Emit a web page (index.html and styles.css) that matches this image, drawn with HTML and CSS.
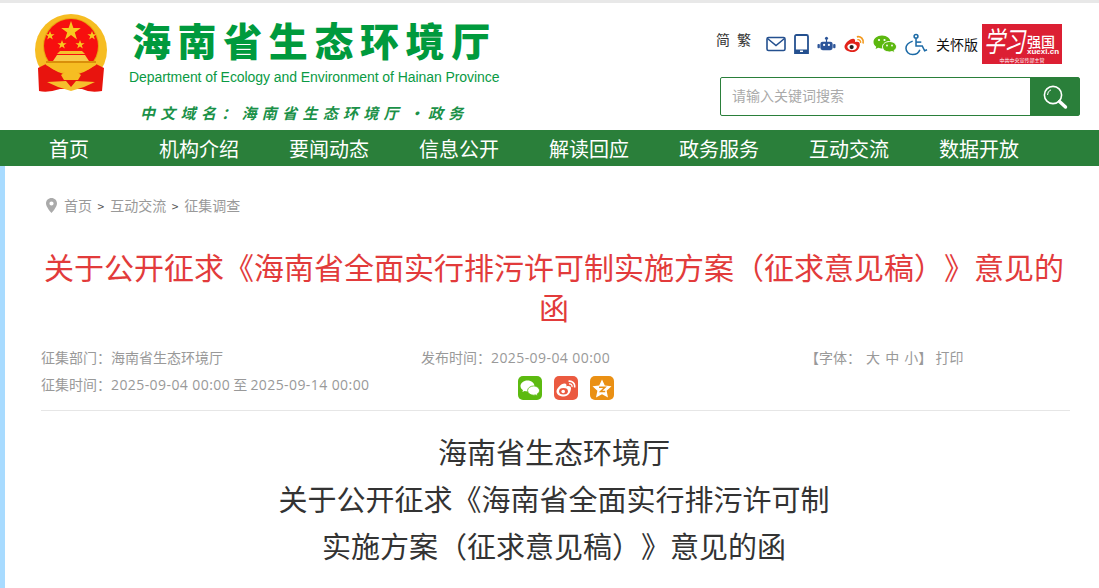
FILE: index.html
```html
<!DOCTYPE html>
<html lang="zh-CN">
<head>
    <meta charset="UTF-8">
    <title>关于公开征求《海南省全面实行排污许可制实施方案（征求意见稿）》意见的函</title>
    <link rel="stylesheet" href="styles.css">
</head>
<body>

<div class="header">
    <svg class="emblem" width="74" height="80" viewBox="0 0 74 80">
        <circle cx="37" cy="36" r="36" fill="#f6bd22"/>
        <circle cx="37" cy="32" r="28" fill="#e9a30f"/>
        <circle cx="37" cy="32" r="27" fill="#f70f0f"/>
        <path d="M4 54 L12 50 Q37 72 62 50 L70 54 L68 77 Q56 79 48 75 L26 75 Q14 79 5 77 Z" fill="#e8140e"/>
        <path d="M10 47 L64 47 L62 51 Q37 68 12 51 Z" fill="#f6bd22"/>
        <path d="M23 41 L51 41 L55 47 L19 47 Z" fill="#f8cb4a"/>
        <path d="M26 37 L48 37 L51 40 L23 40 Z" fill="#f6c02c"/>
        <rect x="12" y="47" width="50" height="2" fill="#d98f0a"/>
        <path d="M27 61 Q37 53 47 61 L44 66 L30 66 Z" fill="#f6bd22"/>
        <path d="M13 68 L32 67 L37 73 L42 67 L61 68 L50 73 L37 77 L24 73 Z" fill="#f6c02c"/>
        <path d="M37 7 l2.4 7 h7.4 l-6 4.4 2.2 7 -6-4.3 -6 4.3 2.2-7 -6-4.4 h7.4 z" fill="#f8c91f"/>
        <path d="M16 17 l1.2 3.2 h3.4 l-2.8 2 1 3.3 -2.8-2 -2.8 2 1-3.3 -2.8-2 h3.4 z" fill="#f8c91f"/>
        <path d="M58 17 l1.2 3.2 h3.4 l-2.8 2 1 3.3 -2.8-2 -2.8 2 1-3.3 -2.8-2 h3.4 z" fill="#f8c91f"/>
        <path d="M28 26 l1.2 3.2 h3.4 l-2.8 2 1 3.3 -2.8-2 -2.8 2 1-3.3 -2.8-2 h3.4 z" fill="#f8c91f"/>
        <path d="M46 26 l1.2 3.2 h3.4 l-2.8 2 1 3.3 -2.8-2 -2.8 2 1-3.3 -2.8-2 h3.4 z" fill="#f8c91f"/>
    </svg>
    <div class="brand">
        <div class="brand-cn">海南省生态环境厅</div>
        <div class="brand-en">Department of Ecology and Environment of Hainan Province</div>
        <div class="brand-domain">中文域名：海南省生态环境厅<span class="dot">•</span>政务</div>
    </div>
    <div class="tools">
        <div class="tool-row">
            <span class="lang">简</span>
            <span class="lang lang-last">繁</span>
            <svg class="tool-icon" width="20" height="16" viewBox="0 0 20 16" fill="none" stroke="#24508f" stroke-width="1.6">
                <rect x="1" y="1.5" width="18" height="13" rx="1.5"/>
                <path d="M1.5 2.5 L10 9.5 L18.5 2.5"/>
            </svg>
            <svg class="tool-icon" width="15" height="20" viewBox="0 0 15 20">
                <path d="M2.5 1 H12.5 Q14 1 14 2.5 V19 H1 V2.5 Q1 1 2.5 1 Z" fill="none" stroke="#24508f" stroke-width="1.8"/>
                <rect x="1" y="15.5" width="13" height="3.5" fill="#24508f"/>
                <rect x="6" y="16.5" width="3" height="1.5" fill="#fff"/>
            </svg>
            <svg class="tool-icon" width="19" height="16" viewBox="0 0 20 16" fill="#2d5599">
                <circle cx="10" cy="2" r="1.6"/>
                <rect x="9.4" y="2" width="1.2" height="4"/>
                <rect x="3.5" y="5.5" width="13" height="9" rx="2.5"/>
                <rect x="0.5" y="8" width="2.5" height="4.5" rx="1"/>
                <rect x="17" y="8" width="2.5" height="4.5" rx="1"/>
                <circle cx="7.5" cy="9" r="1.2" fill="#fff"/>
                <circle cx="12.5" cy="9" r="1.2" fill="#fff"/>
            </svg>
            <svg class="tool-icon" width="21" height="18" viewBox="0 0 22 18" fill="none">
                <path d="M9 17.5 C4 17.5 0.5 15 0.5 12 C0.5 8.5 6 3.5 9.5 3.5 C11.5 3.5 12 5 11.5 7 C14 6 16.5 6.5 16.5 9 C17 13.5 13 17.5 9 17.5 Z" fill="#e2231a"/>
                <ellipse cx="8.5" cy="12" rx="5" ry="3.6" fill="#fff"/>
                <circle cx="8" cy="12.2" r="2.2" fill="#222"/>
                <path d="M13.5 1.5 C17.5 0.5 21 4 20 8.5" stroke="#f39a1e" stroke-width="1.8"/>
                <path d="M14 4.5 C16 4 18 6 17.3 8" stroke="#f39a1e" stroke-width="1.5"/>
            </svg>
            <svg class="tool-icon" width="24" height="18" viewBox="0 0 24 18">
                <path d="M9 0.5 C4 0.5 0.5 3.5 0.5 7 C0.5 9 1.6 10.6 3.2 11.8 L2.6 14 L5.2 12.8 C6.4 13.2 7.6 13.4 9 13.4 C14 13.4 17.5 10.5 17.5 7 C17.5 3.5 14 0.5 9 0.5 Z" fill="#5cb80f"/>
                <path d="M16.5 6.5 C12.5 6.5 9.5 9 9.5 11.8 C9.5 14.6 12.5 17 16.5 17 C17.5 17 18.3 16.8 19.2 16.5 L21.6 17.8 L21 15.6 C22.6 14.6 23.5 13.3 23.5 11.8 C23.5 9 20.5 6.5 16.5 6.5 Z" fill="#5cb80f" stroke="#fff" stroke-width="1"/>
                <circle cx="6" cy="5" r="1.1" fill="#fff"/>
                <circle cx="11.5" cy="5" r="1.1" fill="#fff"/>
                <circle cx="14" cy="10.5" r="0.9" fill="#fff"/>
                <circle cx="19" cy="10.5" r="0.9" fill="#fff"/>
            </svg>
            <svg class="tool-icon" width="23" height="23" viewBox="0 0 24 23" fill="none" stroke="#1c6aa6" stroke-width="1.6">
                <circle cx="11.5" cy="3" r="2"/>
                <path d="M11.5 5.5 V13 H18 L20.5 18 L23 17"/>
                <path d="M11.5 9 H17"/>
                <path d="M8 8 C3.5 9.5 1 12.5 1 15.5 C1 19 4 22 8 22 C11.5 22 14.5 20 15.5 17"/>
            </svg>
            <span class="care">关怀版</span>
            <div class="xuexi">
                <div class="xuexi-main">
                    <span class="xuexi-script">学习</span>
                    <span class="xuexi-side">
                        <span class="xuexi-name">强国</span>
                        <span class="xuexi-url">xuexi.cn</span>
                    </span>
                </div>
                <div class="xuexi-small">中共中央宣传部主管</div>
            </div>
        </div>
        <div class="search">
            <input class="search-input" type="text" placeholder="请输入关键词搜索">
            <div class="search-btn">
                <svg width="26" height="26" viewBox="0 0 26 26" fill="none" stroke="#fff">
                    <circle cx="11" cy="11" r="8.6" stroke-width="1.6"/>
                    <path d="M5.5 11 A5.5 5.5 0 0 1 9 5.8" stroke-width="1"/>
                    <path d="M17.5 17.5 L23.5 23" stroke-width="3.4" stroke-linecap="round"/>
                </svg>
            </div>
        </div>
    </div>
</div>

<div class="nav">
    <a class="nav-item">首页</a>
    <a class="nav-item">机构介绍</a>
    <a class="nav-item">要闻动态</a>
    <a class="nav-item">信息公开</a>
    <a class="nav-item">解读回应</a>
    <a class="nav-item">政务服务</a>
    <a class="nav-item">互动交流</a>
    <a class="nav-item">数据开放</a>
</div>

<div class="page">
    <div class="crumbs">
        <svg class="pin" width="11" height="15" viewBox="0 0 11 15">
            <path fill-rule="evenodd" d="M5.5 0 C8.6 0 11 2.4 11 5.4 C11 9 5.5 15 5.5 15 C5.5 15 0 9 0 5.4 C0 2.4 2.4 0 5.5 0 Z M5.5 3.4 A2.1 2.1 0 1 0 5.5 7.6 A2.1 2.1 0 1 0 5.5 3.4 Z" fill="#aaa"/>
        </svg>
        <span>首页</span><span class="sep">&gt;</span><span>互动交流</span><span class="sep">&gt;</span><span>征集调查</span>
    </div>

    <h1 class="title">关于公开征求《海南省全面实行排污许可制实施方案（征求意见稿）》意见的函</h1>

    <div class="meta">
        <div class="meta-row">
            <div class="meta-a">征集部门：海南省生态环境厅</div>
            <div class="meta-b">发布时间：<span class="num">2025-09-04 00:00</span></div>
            <div class="meta-c">【字体：<span class="font-sizes">大 中 小</span>】 打印</div>
        </div>
        <div class="meta-row">
            <div class="meta-a">征集时间：<span class="num">2025-09-04 00:00</span> 至 <span class="num">2025-09-14 00:00</span></div>
            <div class="share">
                <span class="share-btn share-wx">
                    <svg width="20" height="17" viewBox="0 0 20 17">
                        <path d="M7.5 0.5 C3.5 0.5 0.5 3 0.5 6 C0.5 7.8 1.5 9.2 3 10.2 L2.4 12 L4.6 11 C5.5 11.3 6.5 11.4 7.5 11.4 C11.5 11.4 14.5 9 14.5 6 C14.5 3 11.5 0.5 7.5 0.5 Z" fill="#fff"/>
                        <path d="M13.5 6 C10.2 6 7.6 8.1 7.6 10.6 C7.6 13.1 10.2 15.2 13.5 15.2 C14.2 15.2 14.9 15.1 15.6 14.9 L17.6 16 L17.1 14.2 C18.6 13.2 19.5 12 19.5 10.6 C19.5 8.1 16.8 6 13.5 6 Z" fill="#fff" stroke="#5cba10" stroke-width="0.8"/>
                    </svg>
                </span>
                <span class="share-btn share-wb">
                    <svg width="20" height="17" viewBox="0 0 20 17" fill="none">
                        <path d="M8 16.5 C4 16.5 0.5 14.5 0.5 11.5 C0.5 8.5 5 3.5 8.5 3.5 C10.5 3.5 10.8 5 10.3 6.5 C12.5 5.6 15 6 15 8.3 C15 12.5 12 16.5 8 16.5 Z" fill="#fff"/>
                        <ellipse cx="7.5" cy="11.3" rx="4.4" ry="3.2" fill="#eb5a40"/>
                        <circle cx="7.2" cy="11.5" r="1.8" fill="#fff"/>
                        <path d="M12.5 1.2 C16 0.5 19.5 3.5 18.5 7.5" stroke="#fff" stroke-width="1.6"/>
                        <path d="M13 4 C15 3.6 16.6 5.2 16 7" stroke="#fff" stroke-width="1.3"/>
                    </svg>
                </span>
                <span class="share-btn share-qz">
                    <svg width="20" height="19" viewBox="0 0 20 19">
                        <path d="M10 0.5 L12.8 6.6 L19.5 7.3 L14.6 11.8 L16 18.5 L10 15.2 L4 18.5 L5.4 11.8 L0.5 7.3 L7.2 6.6 Z" fill="#fff"/>
                        <path d="M7 8.2 H13 L8.6 12.4 H13.2" fill="none" stroke="#ea9014" stroke-width="1.5"/>
                    </svg>
                </span>
            </div>
        </div>
    </div>

    <div class="article">
        <p>海南省生态环境厅</p>
        <p>关于公开征求《海南省全面实行排污许可制</p>
        <p>实施方案（征求意见稿）》意见的函</p>
    </div>
</div>

</body>
</html>
```

FILE: styles.css
```css
html, body {
    margin: 0;
    padding: 0;
    height: 588px;
    overflow: hidden;
    background: #fff;
    font-family: "Noto Sans CJK SC", "Liberation Sans", sans-serif;
    color: #333;
    text-spacing-trim: space-all;
}

.header {
    display: flex;
    height: 127px;
    border-top: 3px solid #e8e8e8;
}

.emblem {
    margin: 11px 0 0 34px;
    flex-shrink: 0;
}

.brand {
    margin-left: 21px;
    width: 400px;
}

.brand-cn {
    margin: 14px 0 0 3px;
    font-size: 39px;
    line-height: 44px;
    font-weight: 900;
    letter-spacing: 6.6px;
    color: #009a3d;
    white-space: nowrap;
}

.brand-en {
    margin-top: 7px;
    font-family: "Liberation Sans", sans-serif;
    font-size: 14px;
    line-height: 18px;
    letter-spacing: -0.07px;
    color: #0a9a44;
    white-space: nowrap;
}

.brand-domain {
    margin: 17px 0 0 11px;
    font-size: 15px;
    line-height: 20px;
    font-weight: 700;
    font-style: italic;
    letter-spacing: 5.3px;
    color: #1b9148;
    white-space: nowrap;
}

.dot {
    display: inline-block;
    width: 24px;
    letter-spacing: 0;
    text-align: center;
}

.tools {
    margin-left: auto;
    width: 379px;
}

.tool-row {
    display: flex;
    align-items: center;
    height: 40px;
    margin: 21px 0 0 -4px;
}

.lang {
    font-size: 14px;
    line-height: 20px;
    color: #333;
    margin-right: 7px;
    position: relative;
    top: -5px;
}

.lang-last {
    margin-right: 15px;
}

.tool-icon {
    flex-shrink: 0;
    margin-right: 8px;
}

.care {
    font-size: 14px;
    color: #111;
    margin-right: 4px;
    white-space: nowrap;
}

.xuexi {
    width: 80px;
    height: 40px;
    background: #dc1f33;
    color: #fff;
    flex-shrink: 0;
    overflow: hidden;
}

.xuexi-main {
    display: flex;
    height: 32px;
    padding-left: 2px;
}

.xuexi-script {
    font-size: 21px;
    line-height: 32px;
    font-style: italic;
    font-weight: 400;
    letter-spacing: -1px;
    white-space: nowrap;
    transform: scaleY(1.35);
}

.xuexi-side {
    display: flex;
    flex-direction: column;
    margin: 10px 0 0 3px;
}

.xuexi-name {
    font-size: 14px;
    line-height: 14px;
    font-weight: 500;
    white-space: nowrap;
}

.xuexi-url {
    font-family: "Liberation Sans", sans-serif;
    font-size: 8px;
    line-height: 8px;
    font-weight: 700;
    white-space: nowrap;
}

.xuexi-small {
    font-size: 5px;
    line-height: 8px;
    text-align: center;
    white-space: nowrap;
}

.search {
    display: flex;
    width: 360px;
    height: 39px;
    margin-top: 13px;
    box-sizing: border-box;
    border: 1px solid #2a7f3a;
    border-radius: 2px;
}

.search-input {
    flex: 1;
    min-width: 0;
    border: 0;
    outline: 0;
    padding: 0 11px 3px;
    font-family: "Noto Sans CJK SC", sans-serif;
    font-size: 14px;
    line-height: 20px;
    background: transparent;
}

.search-input::placeholder {
    color: #aaa;
    opacity: 1;
}

.search-btn {
    width: 49px;
    background: #2a7f3a;
    display: flex;
    align-items: center;
    justify-content: center;
}

.nav {
    display: flex;
    height: 36px;
    padding-left: 4px;
    background: #2a7f3a;
}

.nav-item {
    width: 130px;
    font-size: 20px;
    line-height: 38px;
    color: #fff;
    text-align: center;
    white-space: nowrap;
}

.page {
    height: 422px;
    border-left: 5px solid #a8dbff;
    padding: 0 29px 0 36px;
    overflow: hidden;
}

.crumbs {
    display: flex;
    align-items: center;
    height: 20px;
    margin-top: 29px;
    padding-left: 5px;
    font-size: 14px;
    color: #999;
}

.pin {
    margin-right: 7px;
}

.sep {
    margin: 0 6px 0 5.5px;
    color: #555;
    font-size: 12px;
}

.title {
    margin: 31px 3px 0 0;
    font-size: 30px;
    line-height: 40px;
    font-weight: 400;
    color: #e23b3b;
    text-align: center;
}

.meta {
    margin-top: 18px;
    border-bottom: 1px solid #e6e6e6;
    height: 66px;
}

.meta-row {
    display: flex;
    height: 27px;
    font-size: 14px;
    line-height: 27px;
    color: #999;
    white-space: nowrap;
}

.num {
    font-family: "Open Sans", sans-serif;
    letter-spacing: 0.42px;
}

.meta-a {
    width: 380px;
}

.meta-b {
    width: 384px;
}

.font-sizes {
    margin-left: 5px;
    word-spacing: 2px;
}

.share {
    display: flex;
    gap: 12px;
    margin: 5px 0 0 97px;
}

.share-btn {
    display: flex;
    align-items: center;
    justify-content: center;
    width: 24px;
    height: 24px;
    border-radius: 5px;
}

.share-wx {
    background: #5cba10;
}

.share-wb {
    background: #eb5a40;
}

.share-qz {
    background: #ea9014;
}

.article {
    margin: 17px 3px 0 0;
    text-align: center;
    color: #333;
}

.article p {
    margin: 0;
    font-size: 29px;
    line-height: 47px;
    white-space: nowrap;
}
```
